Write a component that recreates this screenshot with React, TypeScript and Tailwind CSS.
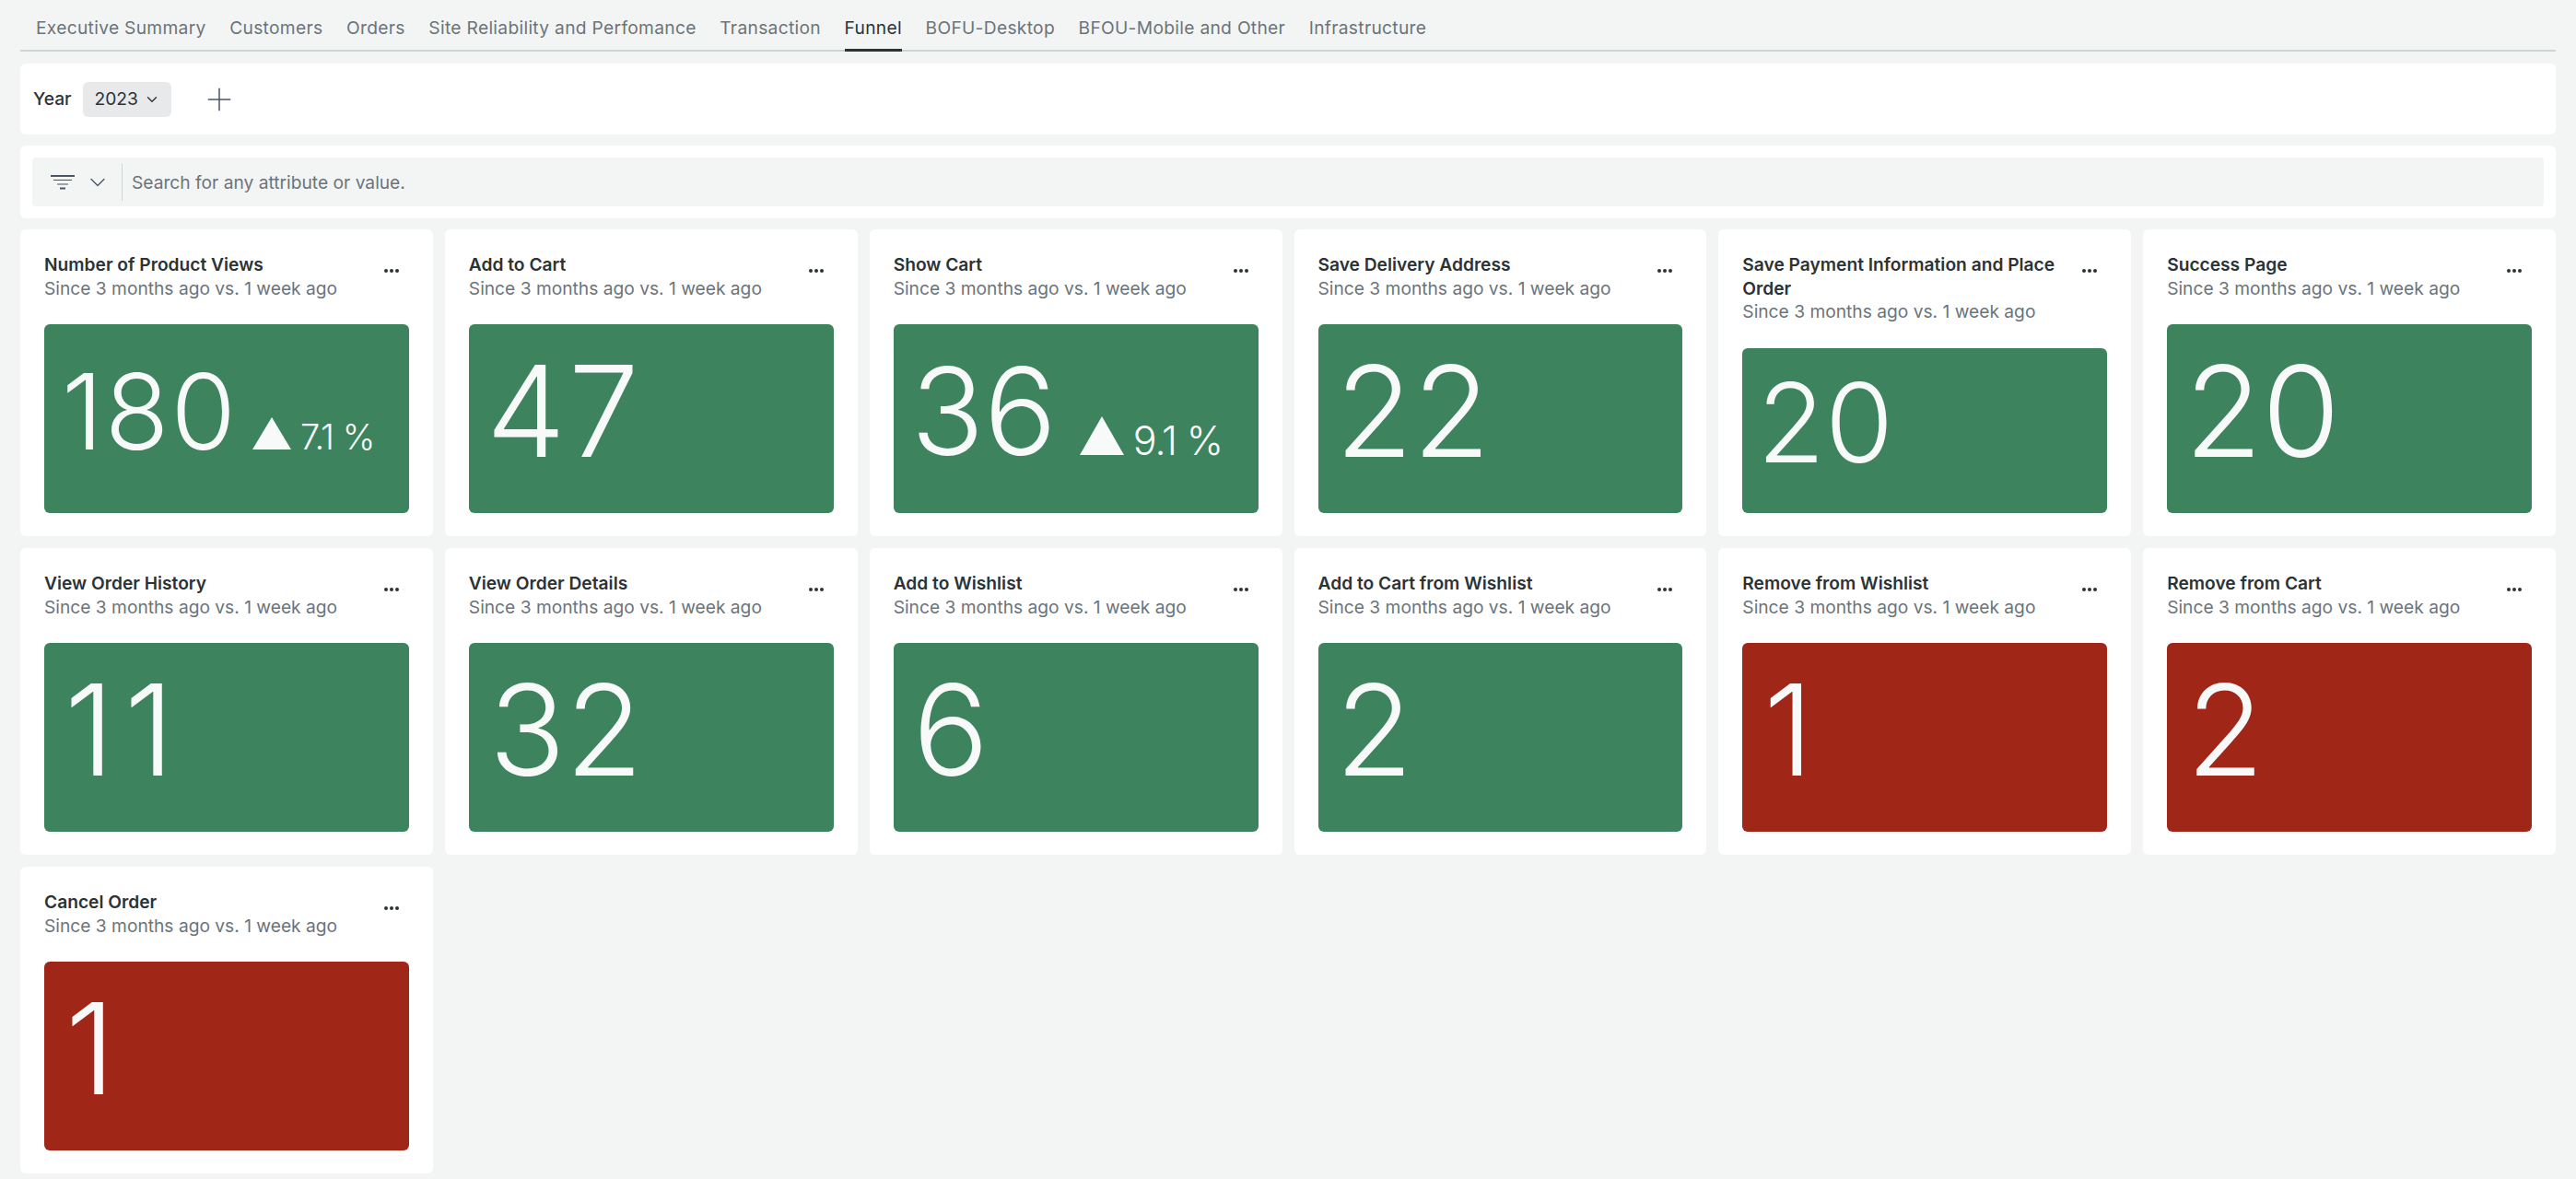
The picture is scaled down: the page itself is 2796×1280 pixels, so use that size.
import React from 'react';
import { ChevronDown, Plus } from 'lucide-react';

const tabs = [
  'Executive Summary',
  'Customers',
  'Orders',
  'Site Reliability and Perfomance',
  'Transaction',
  'Funnel',
  'BOFU-Desktop',
  'BFOU-Mobile and Other',
  'Infrastructure',
];

type Delta = {
  text: string;
  textSize: string;
  width: number;
  height: number;
  gap: string;
};

type Metric = {
  title: string;
  value: string;
  size: string;
  nudge?: string; // small per-value offset / spacing for the big number
  red?: boolean;
  delta?: Delta;
};

const metrics: Metric[] = [
  {
    title: 'Number of Product Views',
    value: '180',
    size: 'text-[114px]',
    nudge: 'tracking-[2px]',
    delta: { text: '7.1 %', textSize: 'text-[38px]', width: 42, height: 35, gap: 'ml-[16px]' },
  },
  { title: 'Add to Cart', value: '47', size: 'text-[137px]', nudge: 'tracking-[3px]' },
  {
    title: 'Show Cart',
    value: '36',
    size: 'text-[131px]',
    delta: { text: '9.1 %', textSize: 'text-[43px]', width: 48, height: 42, gap: 'ml-[25px]' },
  },
  { title: 'Save Delivery Address', value: '22', size: 'text-[137px]' },
  { title: 'Save Payment Information and Place Order', value: '20', size: 'text-[120px]', nudge: '-ml-[3px]' },
  { title: 'Success Page', value: '20', size: 'text-[137px]' },
  { title: 'View Order History', value: '11', size: 'text-[137px]', nudge: 'ml-[3px] tracking-[11px]' },
  { title: 'View Order Details', value: '32', size: 'text-[137px]', nudge: 'ml-[3px]' },
  { title: 'Add to Wishlist', value: '6', size: 'text-[137px]', nudge: 'ml-[2px]' },
  { title: 'Add to Cart from Wishlist', value: '2', size: 'text-[137px]' },
  { title: 'Remove from Wishlist', value: '1', size: 'text-[137px]', nudge: 'ml-[4px]', red: true },
  { title: 'Remove from Cart', value: '2', size: 'text-[137px]', nudge: 'ml-[2px]', red: true },
  { title: 'Cancel Order', value: '1', size: 'text-[137px]', nudge: 'ml-[4px]', red: true },
];

const FilterIcon = () => (
  <svg width="26" height="16" viewBox="0 0 26 16" fill="none" stroke="#4b5563">
    <path d="M0 1h26" strokeWidth="2" />
    <path d="M3 5.5h20M7 10h12" strokeWidth="1.2" />
    <path d="M10 14.5h6" strokeWidth="2" />
  </svg>
);

const MetricCard = ({ metric }: { metric: Metric }) => (
  <div className="flex h-[333px] flex-col rounded-md bg-white px-[26px] pt-[26px] pb-[25px]">
    <div className="flex items-start justify-between">
      <div className="min-w-0 flex-1 pr-6">
        <div className="text-[19.2px] leading-[25.5px] font-semibold text-[#2b3337]">{metric.title}</div>
        <div className="text-[19.2px] leading-[25.5px] text-[#6b747b]">Since 3 months ago vs. 1 week ago</div>
      </div>
      <div className="mt-[17px] mr-[11px] flex gap-[2px]">
        <span className="h-[4px] w-[4px] rounded-full bg-[#2b3337]" />
        <span className="h-[4px] w-[4px] rounded-full bg-[#2b3337]" />
        <span className="h-[4px] w-[4px] rounded-full bg-[#2b3337]" />
      </div>
    </div>
    <div
      className={`mt-[26px] flex min-h-0 flex-1 items-center rounded-md px-[19px] pb-[16px] ${
        metric.red ? 'bg-[#a02618]' : 'bg-[#3c835e]'
      }`}
    >
      <div className="flex items-baseline">
        <div className={`${metric.size} ${metric.nudge ?? ''} leading-none font-light text-[#f8fafa]`}>{metric.value}</div>
        {metric.delta && (
          <div className={`${metric.delta.gap} flex items-baseline gap-[10px]`}>
            <svg
              width={metric.delta.width}
              height={metric.delta.height}
              viewBox={`0 0 ${metric.delta.width} ${metric.delta.height}`}
              fill="#f8fafa"
            >
              <path d={`M${metric.delta.width / 2} 0 ${metric.delta.width} ${metric.delta.height}H0Z`} />
            </svg>
            <span className={`${metric.delta.textSize} font-light tracking-tight text-[#f8fafa]`}>{metric.delta.text}</span>
          </div>
        )}
      </div>
    </div>
  </div>
);

export default function App() {
  return (
    <div className="min-h-screen bg-[#f3f5f4] px-[22px] pt-[4px] font-['Inter',sans-serif]">
      <div className="flex h-[52px] gap-[25.6px] border-b-2 border-[#ccd4d7] px-[17px]">
        {tabs.map((tab) => (
          <div
            key={tab}
            className={`-mb-[2px] flex h-[52px] items-center border-b-[3px] pt-[3px] text-[19.2px] tracking-[0.31px] ${
              tab === 'Funnel' ? 'border-[#2b3337] text-[#2b3337]' : 'border-transparent text-[#6b747b]'
            }`}
          >
            {tab}
          </div>
        ))}
      </div>

      <div className="mt-[13px] flex h-[77px] items-center rounded-md bg-white pl-[14px]">
        <span className="text-[19.2px] font-medium text-[#2b3337]">Year</span>
        <div className="ml-[13px] flex h-[38px] w-[96px] items-center gap-[7px] rounded-md bg-[#e7e9ea] pl-[12px] text-[19.2px] text-[#2b3337]">
          2023
          <ChevronDown size={18} strokeWidth={1.8} className="-ml-[1px]" />
        </div>
        <Plus className="ml-[32px] text-[#4b5563]" size={40} strokeWidth={0.9} />
      </div>

      <div className="mt-[12px] h-[79px] rounded-md bg-white px-[13px] py-[13px]">
        <div className="flex h-[53px] items-center rounded bg-[#f3f5f4] pl-[20px]">
          <FilterIcon />
          <ChevronDown className="ml-[11px] text-[#4b5563]" size={28} strokeWidth={1.2} />
          <div className="ml-[12px] h-[40px] w-px bg-[#ccd4d7]" />
          <span className="mt-[1px] ml-[10px] text-[19.2px] text-[#6b747b]">Search for any attribute or value.</span>
        </div>
      </div>

      <div className="mt-[12px] grid grid-cols-6 gap-[13px] pb-[7px]">
        {metrics.map((metric) => (
          <MetricCard key={metric.title} metric={metric} />
        ))}
      </div>
    </div>
  );
}
